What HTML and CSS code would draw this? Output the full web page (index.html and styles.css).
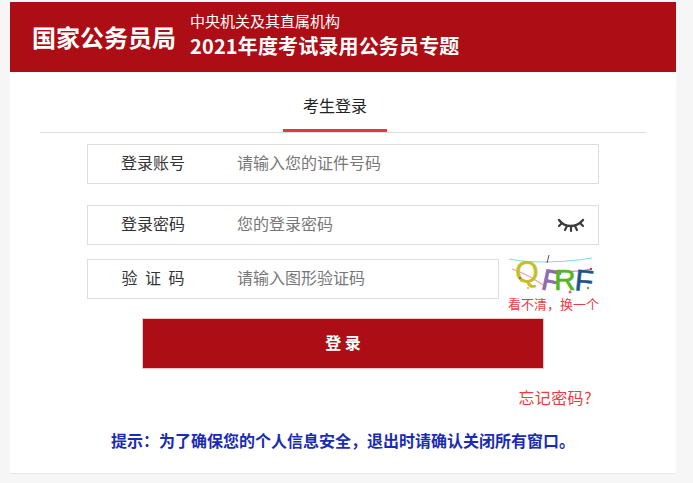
FILE: index.html
```html
<!DOCTYPE html>
<html lang="zh-CN">
<head>
    <meta charset="UTF-8">
    <meta name="viewport" content="width=device-width, initial-scale=1.0">
    <title>国家公务员局</title>
    <link rel="stylesheet" href="styles.css">
</head>
<body>

    <div class="wrap">
        <header class="banner">
            <div class="banner-org">国家公务员局</div>
            <div class="banner-titles">
                <div class="banner-sub">中央机关及其直属机构</div>
                <div class="banner-main">2021年度考试录用公务员专题</div>
            </div>
        </header>

        <section class="login">
            <div class="tabs">
                <div class="tab">考生登录</div>
            </div>

            <div class="field field-first">
                <span class="field-label">登录账号</span>
                <span class="field-hint">请输入您的证件号码</span>
            </div>

            <div class="field field-second">
                <span class="field-label">登录密码</span>
                <span class="field-hint">您的登录密码</span>
                <svg class="eye" width="28" height="16" viewBox="0 0 28 16">
                    <path d="M2 3 C8 11 19 11 26 3" fill="none" stroke="#3c3c3c" stroke-width="2.4" stroke-linecap="round"/>
                    <path d="M5 6 L2 9 M10 9 L8 13 M14 10 L14 14 M18 9 L20 13 M23 6 L26 9" fill="none" stroke="#3c3c3c" stroke-width="2.2" stroke-linecap="round"/>
                </svg>
            </div>

            <div class="captcha-row">
                <div class="field field-code">
                    <span class="field-label label-spaced">验 证 码</span>
                    <span class="field-hint">请输入图形验证码</span>
                </div>
                <div class="captcha">
                    <svg class="captcha-img" width="86" height="46" viewBox="0 0 86 46">
                        <path d="M1 5 C25 10 60 8 84 4" fill="none" stroke="#7fdcd2" stroke-width="1"/>
                        <path d="M4 15 C20 20 30 28 37 32" fill="none" stroke="#eb9cb0" stroke-width="1.2"/>
                        <path d="M42 16 C55 18 70 18 83 15" fill="none" stroke="#e86a8a" stroke-width="1"/>
                        <path d="M41 1 L39 9" fill="none" stroke="#555" stroke-width="1"/>
                        <text class="captcha-char" x="8" y="29" fill="#c9bd24" stroke="#c9bd24" transform="rotate(-4 8 29)">Q</text>
                        <text class="captcha-char" x="32" y="35" fill="#8c6bb0" stroke="#8c6bb0" transform="rotate(12 32 35)">F</text>
                        <text class="captcha-char" x="46" y="36" fill="#52b81e" stroke="#52b81e">R</text>
                        <text class="captcha-char" x="66" y="36" fill="#1d5390" stroke="#1d5390" transform="rotate(6 66 36)">F</text>
                        <circle cx="20" cy="34" r="1" fill="#c9bd24"/>
                        <circle cx="12" cy="24" r="1" fill="#6a5fb0"/>
                        <circle cx="62" cy="38" r="1.4" fill="#e0559a"/>
                        <circle cx="80" cy="34" r="1.2" fill="#52b81e"/>
                        <circle cx="83" cy="15" r="1.2" fill="#d8324a"/>
                    </svg>
                    <div class="captcha-link">看不清，换一个</div>
                </div>
            </div>

            <button class="login-btn">登 录</button>

            <div class="forgot-row">
                <span class="forgot">忘记密码?</span>
            </div>

            <div class="tip">提示：为了确保您的个人信息安全，退出时请确认关闭所有窗口。</div>
        </section>
    </div>

</body>
</html>
```

FILE: styles.css
```css
body {
    margin: 0;
    background-color: #f6f6f6;
    font-family: "Noto Sans CJK SC", "Liberation Sans", sans-serif;
    color: #333;
}

.wrap {
    width: 666px;
    margin: 2px 0 0 10px;
    background-color: #fff;
    border-bottom: 1px solid #e8e8e8;
}

.banner {
    display: flex;
    align-items: center;
    height: 70px;
    padding-left: 22px;
    box-sizing: border-box;
    background-color: #ad0d15;
    color: #fff;
}

.banner-org {
    width: 158px;
    padding-bottom: 2px;
    font-size: 24px;
    font-weight: bold;
    white-space: nowrap;
}

.banner-sub {
    margin-top: -3px;
    font-size: 15px;
    line-height: 20px;
}

.banner-main {
    font-size: 20px;
    font-weight: bold;
    line-height: 30px;
    letter-spacing: 0.15px;
}

.login {
    height: 401px;
    padding: 0 30px;
    box-sizing: border-box;
}

.tabs {
    display: flex;
    justify-content: center;
    height: 60px;
    padding-right: 16px;
    border-bottom: 1px solid #ddd;
}

.tab {
    width: 104px;
    height: 60px;
    box-sizing: border-box;
    padding-top: 21px;
    text-align: center;
    font-size: 16px;
    line-height: 24px;
    color: #222;
    border-bottom: 3px solid #e0393e;
}

.field {
    display: flex;
    align-items: center;
    height: 40px;
    box-sizing: border-box;
    margin-left: 47px;
    border: 1px solid #ddd;
    font-size: 16px;
}

.field-first {
    width: 512px;
    margin-top: 11px;
}

.field-second {
    width: 512px;
    margin-top: 21px;
}

.field-code {
    width: 412px;
    margin-top: 14px;
}

.field-label {
    width: 130px;
    margin-right: 19px;
    padding-bottom: 5px;
    text-align: center;
    font-size: 16px;
    color: #333;
}

.label-spaced {
    word-spacing: 4px;
}

.field-hint {
    padding-bottom: 5px;
    color: #777;
}

.eye {
    margin-left: auto;
    margin-right: 13px;
}

.captcha-row {
    display: flex;
}

.captcha {
    margin: 9px 0 0 9px;
    width: 92px;
}

.captcha-img {
    display: block;
    margin-bottom: -4px;
}

.captcha-char {
    font-family: "Liberation Sans", sans-serif;
    font-size: 30px;
    stroke-width: 0.6px;
}

.captcha-link {
    font-size: 13px;
    line-height: 16px;
    color: #ee3a3f;
    white-space: nowrap;
}

.login-btn {
    display: block;
    width: 402px;
    height: 51px;
    margin: 6px 0 0 102px;
    padding-bottom: 4px;
    background-color: #ad0d15;
    border: 1px solid #f5c6cb;
    color: #fff;
    font-family: inherit;
    font-size: 16px;
    font-weight: bold;
}

.forgot-row {
    margin-top: 16px;
    padding-right: 54px;
    text-align: right;
}

.forgot {
    font-size: 16px;
    line-height: 22px;
    letter-spacing: 0.4px;
    color: #ee3a3f;
}

.tip {
    margin: 19px 0 0 71px;
    font-size: 16px;
    line-height: 24px;
    font-weight: bold;
    color: #1a2cb4;
    white-space: nowrap;
}
```
